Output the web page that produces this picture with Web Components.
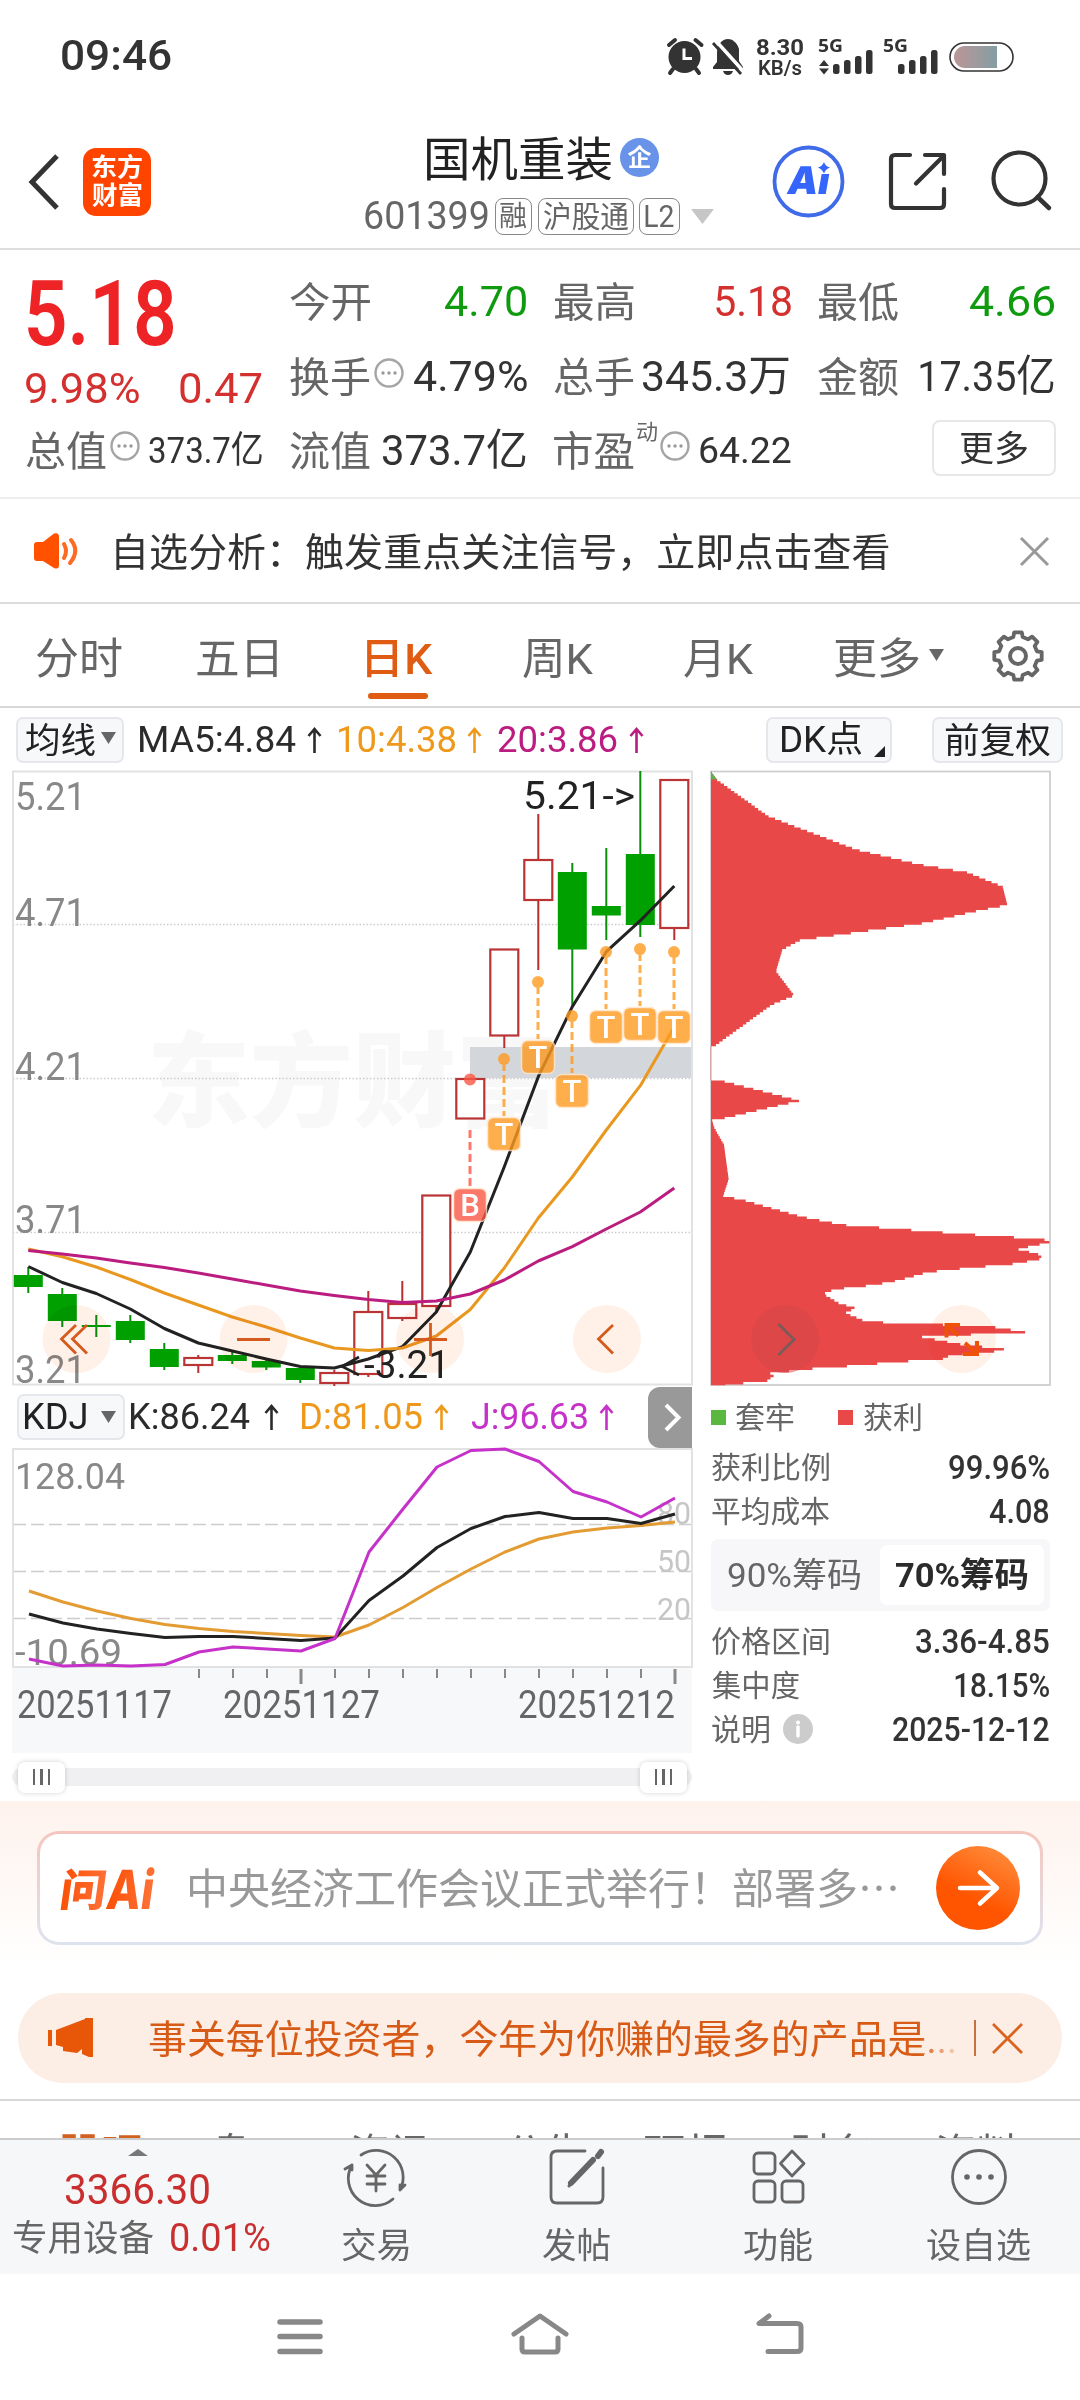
<!DOCTYPE html>
<html lang="zh-CN">
<head>
<meta charset="utf-8">
<title>国机重装 601399</title>
<style>
html,body{margin:0;padding:0;background:#fff}
body{width:1080px;height:2400px;overflow:hidden;font-family:Roboto,"Noto Sans CJK SC",sans-serif;color:#222}
</style>
</head>
<body>
<stock-page></stock-page>
<script>
const FONT='Roboto,"Noto Sans CJK SC",sans-serif';
const ctx=document.createElement('canvas').getContext('2d');

/* Base class: open shadow root filled from css + markup. */
class Base extends HTMLElement{
  connectedCallback(){
    if(this.shadowRoot)return;
    const r=this.attachShadow({mode:'open'});
    r.innerHTML='<style>:host{display:block;box-sizing:border-box}*{box-sizing:border-box}svg{display:block;flex:none;overflow:visible}.row{display:flex;align-items:center}.row>*{flex:none}'+this.css()+'</style>'+this.html();
  }
  css(){return ''}
  html(){return '<slot></slot>'}
}
/* A label whose drawn glyphs span exactly `w` pixels at font size `s`. */
class FitText extends HTMLElement{
  connectedCallback(){
    if(this.shadowRoot)return;
    const s=+this.getAttribute('s'),w=+this.getAttribute('w'),b=this.getAttribute('b')||400,c=this.getAttribute('c')||'inherit';
    ctx.font=`${b} ${s}px ${FONT}`;
    const m=ctx.measureText(this.textContent),L=m.actualBoundingBoxLeft,R=m.actualBoundingBoxRight;
    const k=w/(L+R),dy=/^[\u4e00-\u9fff]/.test(this.textContent)?s*.04:0;
    const r=this.attachShadow({mode:'open'});
    r.innerHTML=`<style>:host{display:block;flex:none;width:${w}px;height:${s}px;line-height:${s}px;font-size:${s}px;font-weight:${b};color:${c};white-space:nowrap}
      span{display:inline-block;transform-origin:0 50%;transform:translate(${L*k}px,${dy}px) scaleX(${k})}</style><span><slot></slot></span>`;
  }
}
const t=(txt,s,w,c,b)=>`<fit-text s="${s}" w="${w}" ${c?`c="${c}"`:''} ${b?`b="${b}"`:''}>${txt}</fit-text>`;
/* A flex row; every item is [start, width, markup, extra style]. */
const row=(h,items,style='')=>{let e=0;return `<div class="row" style="height:${h}px;${style}">`+items.map(([x,w,m,st])=>{const g=x-e;e=x+w;return `<div style="margin-left:${g}px;width:${w}px;${st||''}">${m}</div>`}).join('')+'</div>'};
const T=(x,w,txt,s,c,b,st)=>[x,w,t(txt,s,w,c,b),st];
const G='#666',DK='#2b2b2b';

class StatusBar extends Base{
  css(){return ':host{height:113px}'}
  html(){
    const bars=(x,h)=>`<rect x="${x}" y="${75-h}" width="6.5" height="${h}" rx="2.5"/>`;
    const g5=x=>`<text x="${x}" y="53" font-size="18" font-weight="700" font-family="Noto Sans" textLength="25" lengthAdjust="spacingAndGlyphs">5G</text>`;
    return row(113,[T(62,109,'09:46',42.5,'#333',500),
    [667,37,`<svg width="37" height="37" viewBox="0 0 37 37" fill="#333"><circle cx="17.500" cy="19" r="16"/><path d="M2 7 L8 2 M34.500 7 L28.500 2 M6 31 L3 35 M29 31 L32 35" stroke="#333" stroke-width="4" stroke-linecap="round"/><path d="M17 10.500 V20.500 H25" fill="none" stroke="#fff" stroke-width="3"/></svg>`],
    [712,32,`<svg width="32" height="36" viewBox="0 0 32 36"><path d="M16 0 C20 0 25 3 27 10 V22 L31 28 V30 H1 V28 L5 23 V14 C5 6 10 0 16 0Z M11 32 H21 C20 35 18 36 16 36 S12 35 11 32Z" fill="#333"/><path d="M4 2 L32 33" stroke="#fff" stroke-width="3.500"/><path d="M1 4 L29 35" stroke="#333" stroke-width="2.800"/></svg>`],
    [757,46,`${t('8.30',22.500,46,'#333',700)}<div style="padding-left:2px">${t('KB/s',19.500,43,'#333',600)}</div>`,'padding-top:1px'],
    [819,54,`<svg width="54" height="37" viewBox="819 39 54 37" fill="#333">${g5(818)}${bars(833,10)}${bars(844,14)}${bars(855,18)}${bars(866,24)}<path d="M819 67 L824 61 L829 67Z M819 69.500 L824 75.500 L829 69.500Z"/></svg>`],
    [883,56,`<svg width="56" height="37" viewBox="883 39 56 37" fill="#333">${g5(883)}${bars(898,10)}${bars(909,14)}${bars(920,18)}${bars(931,24)}</svg>`],
    [949,65,`<svg width="65" height="30"><defs><linearGradient id="g"><stop offset="0" stop-color="#bb9698"/><stop offset="1" stop-color="#849ea3"/></linearGradient></defs><rect x="1" y="1" width="63" height="28" rx="14" fill="#fff" stroke="#333" stroke-width="1.600"/><path d="M16 4 H48 V26 H16 A11 11 0 0 1 16 4Z" fill="url(#g)"/></svg>`]]);
  }
}
class StockHeader extends Base{
  css(){return `:host{height:137px;border-bottom:2px solid #ddd;display:flex}
  .logo{width:68px;height:68px;border-radius:13px;background:#ff4400;padding:6px 9px;display:flex;flex-direction:column;gap:3px}
  .mid{width:350px;margin-left:214px;display:flex;flex-direction:column}
  .badge{width:39px;height:39px;border-radius:50%;background:#6893e8;display:flex;align-items:center;justify-content:center}
  .tag{height:37px;border:1.5px solid #888;border-radius:8px;display:flex;align-items:center;justify-content:center}`}
  html(){return `
  ${row(137,[[28,31,`<svg width="31" height="56"><path d="M29 2 L4 28 L29 54" fill="none" stroke="#333" stroke-width="5"/></svg>`],
   [83,68,`<div class="logo">${t('东方',25,50,'#fff',700)}${t('财富',25,50,'#fff',700)}</div>`]])}
  <div class="mid">
   ${row(54,[T(62,185,'国机重装',47,'#222'),[255,39,`<div class="badge">${t('企',24,24,'#fff',700)}</div>`]],'margin-top:17px')}
   ${row(44,[T(0,123,'601399',39,G),[130,37,`<div class="tag">${t('融',28,27,G)}</div>`],[173,96,`<div class="tag">${t('沪股通',30,85,G)}</div>`],[274,41,`<div class="tag">${t('L2',31,29,G)}</div>`],[326,23,`<svg width="23" height="15"><path d="M0 0H23L11.500 15Z" fill="#c6c6c6"/></svg>`]],'margin-top:10px')}
  </div>
  ${row(137,[[57,72,`<svg width="72" height="72" viewBox="772 146 72 72"><circle cx="808.500" cy="181.500" r="34" fill="#fff" stroke="#3f6ae8" stroke-width="3.800"/><text x="786" y="194.500" font-family="Inter" font-weight="900" font-size="38" fill="#3565fb" textLength="42" lengthAdjust="spacingAndGlyphs" transform="translate(34 0) skewX(-10)">Ai</text><rect x="814" y="162" width="18" height="12" fill="#fff"/><path d="M824 162 Q825.500 166.500 830 167.500 Q825.500 169 824 173.500 Q822 169 818 167.500 Q822 166.500 824 162Z" fill="#3565fb"/></svg>`],
  [173,60,`<svg width="60" height="60" viewBox="887 152 60 60"><path d="M909 155 H894 Q890 155 890 159 V204 Q890 208 894 208 H939 Q943 208 943 204 V189 M924 155 H943 V174 M943 155.500 L915 183.500" fill="none" stroke="#333" stroke-width="4.200" stroke-linecap="round" stroke-linejoin="round"/></svg>`],
  [276,60,`<svg width="60" height="60" viewBox="990 152 60 60"><circle cx="1018.500" cy="178.500" r="26" fill="none" stroke="#333" stroke-width="4.200"/><path d="M1036.500 197 L1048 208" stroke="#333" stroke-width="4.500" stroke-linecap="round"/></svg>`]])}`}
}
const dots='<svg width="30" height="30"><circle cx="15" cy="15" r="13.500" fill="none" stroke="#a5a5a5" stroke-width="2.400"/><g fill="#999"><circle cx="9" cy="15" r="1.700"/><circle cx="15" cy="15" r="1.700"/><circle cx="21" cy="15" r="1.700"/></g></svg>';
class QuotePanel extends Base{
  css(){return `:host{height:249px;border-bottom:2px solid #eee;display:flex}
  .l{width:290px}.r{width:790px}.btn{width:124px;height:56px;border:2px solid #e7e7e7;border-radius:8px;display:flex;align-items:center;justify-content:center}`}
  html(){const R='#d3302f',N='#109a10',K='#333';return `
  <div class="l">${row(90,[T(28,146,'5.18',90,'#ee2326',600)],'margin-top:20px')}
   ${row(46,[T(26,113,'9.98%',43,R),T(180,82,'0.47',43,R)],'margin-top:5px')}
   ${row(60,[T(26,80,'总值',41,G),[110,30,dots,'margin-top:-8px'],T(149,113,'373.7亿',37,K)],'margin-top:9px')}</div>
  <div class="r">
   ${row(60,[T(0,80,'今开',41,G),T(155,81,'4.70',43,N),T(264,80,'最高',41,G),T(426,75,'5.18',43,R),T(528,80,'最低',41,G),T(680,85,'4.66',43,N)],'margin-top:21px')}
   ${row(60,[T(0,80,'换手',41,G),[84,30,dots,'margin-top:-7px'],T(124,113,'4.79%',43,K),T(264,80,'总手',41,G),T(353,146,'345.3万',43,K),T(528,80,'金额',41,G),T(630,134,'17.35亿',43,K)],'margin-top:15px')}
   ${row(60,[T(0,80,'流值',41,G),T(93,143,'373.7亿',43,K),T(264,80,'市盈',41,G),[347,20,t('动',21,20,G),'margin-top:-38px'],[370,30,dots,'margin-top:-8px'],T(410,91,'64.22',37,K),[642,124,`<div class="btn">${t('更多',35,68,K)}</div>`,'margin-top:-4px']],'margin-top:14px')}
  </div>`}
}
class SignalNotice extends Base{
  css(){return ':host{height:105px;border-bottom:2px solid #dcdcdc}'}
  html(){return row(104,[[34,45,`<svg width="45" height="36"><path d="M0 12 Q0 9 3 9 H9 L20 0.500 Q25 -1 25 4 V32 Q25 37 20 35 L9 28 H3 Q0 28 0 25Z" fill="#ff5100"/><path d="M30 11 Q34 18 30 25 M37 7 Q46 18 36 30" fill="none" stroke="#ff6a22" stroke-width="4" stroke-linecap="round"/></svg>`],
   T(116,773,'自选分析：触发重点关注信号，立即点击查看',38.500,'#333'),
   [1020,29,`<svg width="29" height="29"><path d="M1 1L28 28M28 1L1 28" stroke="#999" stroke-width="3"/></svg>`]])}
}
class PeriodTabs extends Base{
  css(){return ':host{height:104px;border-bottom:2px solid #d8d8d8}.bar{width:60px;height:6px;border-radius:3px;background:#df5c12;margin:-14px 0 0 368px}'}
  html(){
   let p='';for(let i=0;i<8;i++){const a=i*45-90,f=(d,r)=>{const q=(a+d)*Math.PI/180;return (26+r*Math.cos(q)).toFixed(1)+' '+(26+r*Math.sin(q)).toFixed(1)};p+=(i?'L':'M')+f(-9,24)+'L'+f(9,24)+'L'+f(14,19.500)+'L'+f(31,19.500)}
   return row(103,[T(36,86,'分时',43,G),T(197,80,'五日',43,G),T(367,66,'日K',43,'#df5c12',500),T(523,70,'周K',43,G),T(684,69,'月K',43,G),T(835,84,'更多',43,G),[929,15,'<svg width="15" height="12"><path d="M0 0H15L7.500 12Z" fill="#666"/></svg>','margin-top:-6px'],[992,52,`<svg width="52" height="52"><path d="${p}Z" fill="none" stroke="#666" stroke-width="3.800" stroke-linejoin="round"/><circle cx="26" cy="26" r="8" fill="none" stroke="#666" stroke-width="4"/></svg>`,'margin-top:-3px']],'padding-top:4px')+'<div class="bar"></div>'}
}
const up=(x,c)=>[x,15,`<svg width="15" height="27"><path d="M7.500 26V2M1.500 9L7.500 2L13.500 9" fill="none" stroke="${c}" stroke-width="2.600"/></svg>`];
const chipCss='.chip{height:46px;border:2px solid #e6e7ec;border-radius:7px;background:#f7f8fa;display:flex;align-items:center}';
class MaBar extends Base{
  css(){return ':host{height:62px}'+chipCss}
  html(){const O='#ee991c',P='#bb1c80';return row(62,[[16,108,`<div class="chip" style="padding-left:8px;gap:6px">${t('均线',35,69,'#222')}<svg width="15" height="12" style="margin-top:-4px"><path d="M0 0H15L7.500 12Z" fill="#666"/></svg></div>`],
   T(140,156,'MA5:4.84',37.500,DK),up(307,DK),T(339,117,'10:4.38',37.500,O),up(467,O),T(498,119,'20:3.86',37.500,P),up(629,P),
   [766,126,`<div class="chip" style="padding-left:13px;gap:12px">${t('DK点',36,81,'#222')}<svg width="11" height="11" style="margin-top:22px"><path d="M11 0V11H0Z" fill="#222"/></svg></div>`],
   [932,131,`<div class="chip" style="padding-left:11px">${t('前复权',35,105,'#222')}</div>`]],'padding-top:2px')}
}
const tx=(x,y,w,s,c,str,b)=>`<text x="${x}" y="${y}" font-size="${s}" fill="${c}" textLength="${w}" lengthAdjust="spacingAndGlyphs" font-weight="${b||400}">${str}</text>`;
/* Candles: kind, body top, body bottom, wick top, wick bottom */
const CANDLES=[['g',1275,1287,1267,1293],['g',1294,1321,1288,1327],['g',1325,1327,1315,1337],['g',1321,1340,1315,1343],['g',1349,1367,1343,1370],['r',1358,1365,1355,1373],['g',1355,1361,1351,1364],['g',1361,1367.5,1360,1370],['g',1368,1380,1368,1383],['r',1373,1383,1370,1386],['r',1312,1374,1291,1377],['r',1304,1318,1281,1321],['r',1195.5,1306,1195,1311],['r',1079,1118.5,1079,1118],['r',949.5,1035.5,949,1048],['r',860,900,814,970],['g',872,949.5,863,1006],['g',906,915.5,848,940],['g',854,925,771,937],['r',780,928,780,940]];
const line=(a,x0,c)=>`<polyline points="${a.map((y,i)=>(x0+34*i)+','+y).join(' ')}" fill="none" stroke="${c}" stroke-width="3" stroke-linejoin="round"/>`;
const round=x=>`<circle cx="${x}" cy="1339" r="34" fill="#fff0e8" style="mix-blend-mode:multiply"/>`;
class CandleChart extends Base{
  css(){return ':host{width:700px;height:616px}text{font-family:Roboto,"Noto Sans CJK SC",sans-serif}'}
  html(){
   const X=i=>28.300+34*i;let s='';
   s+=`<text x="147" y="1119" font-size="103" font-weight="900" fill="#f8f8f8" textLength="412">东方财富</text>`;
   for(const y of [924.5,1078.5,1232.5])s+=`<path d="M13 ${y}H692" stroke="#ccc" stroke-width="1.500" stroke-dasharray="1.500 2"/>`;
   s+='<rect x="470" y="1047" width="222" height="31" fill="#d3d6da"/><rect x="13" y="771.500" width="679" height="613" fill="none" stroke="#e2e2e2" stroke-width="2"/>';
   for(const [y,l] of [[810,'5.21'],[926,'4.71'],[1080,'4.21'],[1233,'3.71'],[1382.5,'3.21']])s+=tx(15,y,71,38.5,'#888',l);
   CANDLES.forEach(([k,a,b,c,d],i)=>{const x=X(i);s+=k=='g'?`<path d="M${x} ${c}V${d}" stroke="#0a8f0a" stroke-width="2"/><rect x="${x-14.5}" y="${a}" width="29" height="${b-a}" fill="#00a000"/>`:`<path d="M${x} ${c}V${a}M${x} ${b}V${d}" stroke="#b92f2f" stroke-width="2"/><rect x="${x-14}" y="${a}" width="28" height="${b-a}" fill="#fff" stroke="#b93434" stroke-width="2.200"/>`});
   s+=line([1266.5,1282.5,1293.5,1309,1328.5,1343,1351,1359,1366.5,1368,1359,1346.7,1312,1252,1166.7,1076.7,1006.7,951.7,920.7,886],28.3,'#222');
   s+=line([1249,1256.7,1267,1279.5,1293,1305,1317,1327,1338,1348,1350.5,1348,1336,1309.5,1268,1218,1177,1130,1085.7,1027],28.3,'#e9981f');
   s+=line([1250.5,1254,1258,1263,1267.5,1273,1279,1285,1291,1295.5,1299.5,1302.5,1301,1294,1280,1261,1246.7,1229,1212,1188],28.3,'#bb1c80');
   const mark=(x,dy,from,cy,l,c)=>`<g opacity=".8"><circle cx="${x}" cy="${dy}" r="6" fill="${c}"/><path d="M${x} ${from}V${cy-18}" stroke="${c}" stroke-width="3" stroke-dasharray="8 4"/><rect x="${x-16.5}" y="${cy-16.5}" width="33" height="33" rx="6" fill="${c}" stroke="#ffe3c4" stroke-width="1.500"/></g><text x="${x}" y="${cy+10.500}" font-size="31" font-weight="500" fill="#fff" text-anchor="middle">${l}</text>`;
   for(const [x,d,c] of [[504,1059,1134],[538,982,1057],[572,1016,1091],[606,952,1027],[640,949,1024],[674,952,1027]])s+=mark(x,d,d+4,c,'T','#ff9a20');
   s+=mark(470,1079.5,1130,1205,'B','#fb5845');
   s+=tx(523,808.5,112,39,'#222','5.21-&gt;')+`<path d="M359 1357L342 1366.500L359 1375" fill="none" stroke="#222" stroke-width="2.600"/>`+tx(364,1378,86,39,'#222','-3.21');
   s+=round(76.5)+round(253.6)+round(430)+round(607);
   s+='<path d="M76 1325L61.500 1339L76 1353.500M87 1325L72.500 1339L87 1353.500M237 1339.500H270M414 1339.500H447M430.500 1323V1356M613 1325L598.500 1339L613 1353.500" fill="none" stroke="#d55a1c" stroke-width="2.800"/>';
   return `<svg width="700" height="616" viewBox="0 770 700 616">${s}</svg>`}
}
class ChipDistribution extends Base{
  css(){return ':host{width:380px;height:616px}'}
  html(){
   const P=[[62,28],[80,48],[235,138],[500,220],[690,256],[830,275],[938,310],[952,355],[850,372],[700,400],[520,420],[330,442],[277,465],[258,518],[313,577],[245,600],[72,702],[62,704],[62,784],[95,786],[330,835],[95,879],[66,881],[72,900],[102,943],[116,1027],[99,1070],[150,1076],[340,1120],[460,1139],[625,1149],[830,1162],[940,1168],[1058,1173],[1080,1182],[1020,1192],[985,1199],[1043,1210],[1060,1221],[980,1234],[830,1245],[715,1255],[625,1275],[555,1286],[435,1297],[400,1308],[447,1331],[497,1343],[466,1355],[520,1373],[592,1379],[735,1383],[920,1390],[1007,1402],[692,1413],[755,1423],[820,1433],[944,1443],[905,1451],[768,1458],[782,1466],[608,1476],[494,1484],[380,1490],[316,1496],[234,1501],[254,1507],[232,1521],[170,1526],[105,1532]];
   let d='M711 771.500',q=0;const st=5.96;
   for(let y=28;y<1532;y+=st){const m=Math.min(y+st/2,1531.9);while(P[q+1][1]<m)q++;const [a,b]=P[q],[c,e]=P[q+1];const x=690+(a+(c-a)*(m-b)/(e-b))/3;d+=`H${x.toFixed(1)}V${(760+Math.min(y+st,1532)/2.45).toFixed(1)}`}
   return `<svg width="380" height="616" viewBox="700 770 380 616"><rect x="711" y="771.500" width="339" height="613.500" fill="#fff" stroke="#ccc" stroke-width="1.700"/><path d="${d}H711Z" fill="#e94848"/><path d="M711 771.500L717 779.500H711Z" fill="#5fb04f"/>
   <circle cx="785" cy="1339" r="34" fill="#d34545" fill-opacity=".5"/><path d="M778.500 1324L794 1339.500L778.500 1355" fill="none" stroke="#7d5a5a" stroke-width="3"/>
   ${round(962)}<path d="M946.500 1337.500V1325H960M947 1325.500L958.500 1335.500M977 1341V1354H963M976.500 1353.500L965 1343" fill="none" stroke="#ee5208" stroke-width="4"/></svg>`}
}
class KdjPane extends Base{
  css(){return ':host{width:700px}text{font-family:Roboto,"Noto Sans CJK SC",sans-serif}.next{width:44px;height:61px;background:#999;border-radius:12px 0 0 12px}.slide{width:680px;height:18px;border-radius:9px;background:#f0f0f3;margin:0 0 0 12px;display:flex;align-items:center;justify-content:space-between;padding:0 5px 0 6px}.h{width:47px;height:31px;border-radius:7px;background:#fff;box-shadow:0 0 5px rgba(0,0,0,.18);display:flex;gap:5px;align-items:center;justify-content:center}.h i{width:2.5px;height:16px;background:#666}'+chipCss}
  html(){
   const O='#ee991c',P='#c531c9';let s='<rect x="12" y="1668" width="680" height="85" fill="#f7f8fa"/><path d="M13 1524.500H692M13 1571.500H692M13 1618.500H692" stroke="#ccc" stroke-width="1.500" stroke-dasharray="13 5"/><rect x="13" y="1449" width="679" height="218" fill="none" stroke="#e2e2e2" stroke-width="2"/>';
   s+=tx(657,1523.5,34,31,'#c6c6c6','80')+tx(657,1572,34,31,'#c6c6c6','50')+tx(657,1620,34,31,'#c6c6c6','20');
   s+=tx(15,1489,110,37.5,'#888','128.04')+tx(15,1665,107,37.5,'#888','-10.69');
   s+=line([1591,1602,1611,1618.5,1624.5,1628.5,1631.5,1633.5,1635.5,1637,1625,1607.5,1587.5,1569,1552,1539,1532,1528,1525.5,1522],29,'#e39c33');
   s+=line([1614,1623,1629,1633.5,1637.5,1636.5,1636.5,1638.5,1640.5,1638,1600.5,1576,1547.5,1528.5,1516.5,1512.5,1518.5,1518.5,1523.5,1514],29,'#222');
   s+=line([1659,1666,1665,1666,1664.5,1652,1647,1649,1651,1638.5,1552,1509,1467,1450.5,1449,1461.5,1491.5,1502,1517,1498],29,P);
   for(let i=5;i<20;i++){const M=i==8||i==19;s+=`<path d="M${29+34*i} 1669V${M?1684:1678}" stroke="#888" stroke-width="${M?3:2}"/>`}
   s+=tx(17,1718,155,38,G,'20251117')+tx(223,1718,157,38,G,'20251127')+tx(518,1718,157,38,G,'20251212');
   return row(62,[[17,108,`<div class="chip" style="padding-left:6px;gap:15px">${t('KDJ',37.5,61,'#222')}<svg width="15" height="12"><path d="M0 0H15L7.500 12Z" fill="#666"/></svg></div>`],T(131,119,'K:86.24',37.5,DK),up(264,DK),T(302,120,'D:81.05',37.5,O),up(434,O),T(471,116,'J:96.63',37.5,P),up(599,P),[648,44,'<div class="next"><svg width="44" height="61"><path d="M18 18L30.500 30.500L18 43" fill="none" stroke="#fff" stroke-width="4"/></svg></div>']])
   +`<svg width="700" height="305" viewBox="0 1448 700 305">${s}</svg><div style="height:15px"></div><div class="slide"><div class="h"><i></i><i></i><i></i></div><div class="h"><i></i><i></i><i></i></div></div>`}
}
class CostPanel extends Base{
  css(){return ':host{width:380px}.sq{width:15px;height:15px}.seg{margin:6px 0 8px 11px;width:339px;height:72px;border-radius:7px;background:#f7f7fa;display:flex;align-items:center;justify-content:space-between;padding:0 6px 0 17px}.on{width:164px;height:60px;border-radius:7px;background:#fff;display:flex;align-items:center;justify-content:center}'}
  html(){const R=(a,aw,b,bx,bw,x)=>row(44,[T(12,aw,a,30,G),...(x||[]),T(bx,bw,b,33,'#333',500)]);
   return row(56,[[11,15,'<div class="sq" style="background:#5ab840"></div>'],T(36,58,'套牢',30,G),[138,16,'<div class="sq" style="background:#e94848"></div>'],T(164,57,'获利',30,G)],'margin-top:3px')
   +R('获利比例',117,'99.96%',249,100)+R('平均成本',117,'4.08',289,60)
   +`<div class="seg">${t('90%筹码',34,132,G)}<div class="on">${t('70%筹码',34,132,'#2b2b2b',700)}</div></div>`
   +R('价格区间',117,'3.36-4.85',216,133)+R('集中度',87,'18.15%',255,94)
   +R('说明',57,'2025-12-12',193,156,[[83,30,'<svg width="30" height="30"><circle cx="15" cy="15" r="15" fill="#ccc"/><circle cx="15" cy="8.500" r="2" fill="#fff"/><path d="M15 13V22" stroke="#fff" stroke-width="3.500" stroke-linecap="round"/></svg>']])}
}
class AskAi extends Base{
  css(){return ':host{height:192px;padding:30px 37px 0;background:linear-gradient(#fef2ed,#fff 88%)}.b{height:114px;border:3px solid transparent;border-radius:22px;background:linear-gradient(#fff,#fff) padding-box,linear-gradient(#f5c5bd,#dde4ef) border-box}'}
  html(){return `<div class="b">${row(108,[[19,100,`<svg width="100" height="46" viewBox="59 1865 100 46"><defs><linearGradient id="a"><stop offset="0" stop-color="#fb4f05"/><stop offset="1" stop-color="#ff7238"/></linearGradient></defs><g fill="url(#a)" transform="translate(60 1907) skewX(-8)"><text x="-2" y="-1" font-family="Noto Sans CJK SC" font-weight="900" font-size="44" textLength="46" lengthAdjust="spacingAndGlyphs">问</text><text x="45" y="2" font-family="Inter" font-weight="800" font-size="54" textLength="47" lengthAdjust="spacingAndGlyphs">Ai</text></g></svg>`],
   T(150,706,'中央经济工作会议正式举行！部署多⋯',42,'#999'),
   [896,84,`<svg width="84" height="84"><defs><linearGradient id="o" x1=".3" y1="1" x2=".8" y2="0"><stop offset=".35" stop-color="#ff5500"/><stop offset="1" stop-color="#ff8d3c"/></linearGradient></defs><circle cx="42" cy="42" r="42" fill="url(#o)"/><path d="M24 42H60M44 26.500L61 42L44 57.500" fill="none" stroke="#fff" stroke-width="4.500" stroke-linecap="round" stroke-linejoin="round"/></svg>`]])}</div>`}
}
class PromoBanner extends Base{
  css(){return ':host{margin:0 18px;height:90px;border-radius:45px;background:#fceee5}.fade{-webkit-mask:linear-gradient(90deg,#000 770px,#0002 810px);mask:linear-gradient(90deg,#000 770px,#0002 810px)}'}
  html(){return row(90,[[29,47,`<svg width="47" height="40" fill="#e85608"><path d="M1 12H5V28H1Z M9 12L38 1V0H46V39H42L35 36V31L30 35L16 33V29L9 27Z"/></svg>`],
   [131,807,`<div class="fade">${t('事关每位投资者，今年为你赚的最多的产品是...',39,806,'#d75b17')}</div>`],
   [956,2,'<div style="height:36px;background:#c9713c"></div>'],
   [974,31,`<svg width="31" height="31"><path d="M1 1L30 30M30 1L1 30" stroke="#d9631f" stroke-width="2.800"/></svg>`]])}
}
class SectionTabs extends Base{
  css(){return ':host{margin-top:16px;height:39px;border-top:2px solid #d8d8d8;overflow:hidden}'}
  html(){return row(46,[T(60,83,'股吧',43,'#d2611f',700),T(211,77,'盘口',43,G),T(352,78,'资讯',43,G),T(506,78,'公告',43,G),T(644,84,'研报',43,G),T(791,82,'财务',43,G),T(937,81,'资料',43,G)],'margin-top:29px')}
}
class ActionBar extends Base{
  css(){return `:host{height:136px;border-top:2px solid #ccc;background:#f6f7f9;display:flex}.idx{width:275px}.a{width:201px;display:flex;flex-direction:column;align-items:center;padding-top:7px;gap:21px}`}
  html(){const R='#c92f2f',a=(svg,l,w)=>`<div class="a"><svg width="62" height="60" viewBox="-31 -30 62 60" fill="none" stroke="#666" stroke-width="2.800" stroke-linecap="round" stroke-linejoin="round">${svg}</svg>${t(l,35,w,'#666')}</div>`;
   return `<div class="idx"><svg width="20" height="7" style="margin:9px 0 0 128px"><path d="M0 7L10 0L20 7Z" fill="#777"/></svg>${row(44,[T(66,143,'3366.30',43,R)],'margin-top:11px')}${row(44,[T(14,140,'专用设备',36,G),T(171,99,'0.01%',38,R)],'margin-top:5px')}</div>`
   +a('<path d="M-15 -22A27 27 0 0 1 24 13L29 8M24 13V8M17 22A27 27 0 0 1 -24 -12L-31 -8M-24 -12V-7M-9 -12L0 -2L9 -12M0 -2V14M-9 -1H9M-9 7H9"/>','交易',67)
   +a('<path d="M8 -26H-20Q-26 -26 -26 -20V20Q-26 26 -20 26H20Q26 26 26 20V-9"/><path d="M-6 6L16 -17" stroke-width="6"/><path d="M-8 9L-4 4" stroke-width="3"/><path d="M21 -21L24 -25" stroke-width="6"/>','发帖',67)
   +a('<rect x="-24" y="-24" width="21" height="21" rx="4"/><rect x="-24" y="4" width="21" height="21" rx="4"/><rect x="4" y="4" width="21" height="21" rx="4"/><path d="M14 -26L26 -13.500L14 -1L2.500 -13.500Z"/>','功能',68)
   +a('<circle r="26.500"/><g fill="#666" stroke="none"><circle cx="-12" r="2.800"/><circle r="2.800"/><circle cx="12" r="2.800"/></g>','设自选',103)}
}
class NavBar extends Base{
  css(){return ':host{height:126px;padding-top:38px}'}
  html(){const A='fill="none" stroke="#888" stroke-linecap="round" stroke-linejoin="round"';return row(44,[[277,46,`<svg width="46" height="44" ${A} stroke-width="5.500"><path d="M3 10H43M3 24.500H43M3 39.500H43"/></svg>`],
   [511,58,`<svg width="58" height="44" ${A} stroke-width="5"><path d="M3 22L29 4L55 22M11 26V37Q11 40 14 40H44Q47 40 47 37V26"/></svg>`],
   [756,48,`<svg width="48" height="44" ${A} stroke-width="5"><path d="M13 4L3 11.500H41Q45 11.500 45 15V36Q45 39.500 41 39.500H12"/></svg>`]])}
}
class StockPage extends Base{
  css(){return ':host{width:1080px;height:2400px;overflow:hidden;background:#fff}.c{display:flex;align-items:flex-start}.k{height:415px}'}
  html(){return `<status-bar></status-bar><stock-header></stock-header><quote-panel></quote-panel><signal-notice></signal-notice><period-tabs></period-tabs><ma-bar></ma-bar>
  <div class="c"><candle-chart></candle-chart><chip-distribution></chip-distribution></div>
  <div class="c k"><kdj-pane></kdj-pane><cost-panel></cost-panel></div>
  <ask-ai></ask-ai><promo-banner></promo-banner><section-tabs></section-tabs><action-bar></action-bar><nav-bar></nav-bar>`}
}
customElements.define('fit-text',FitText);
for(const [n,c] of Object.entries({'status-bar':StatusBar,'stock-header':StockHeader,'quote-panel':QuotePanel,'signal-notice':SignalNotice,'period-tabs':PeriodTabs,'ma-bar':MaBar,'candle-chart':CandleChart,'chip-distribution':ChipDistribution,'kdj-pane':KdjPane,'cost-panel':CostPanel,'ask-ai':AskAi,'promo-banner':PromoBanner,'section-tabs':SectionTabs,'action-bar':ActionBar,'nav-bar':NavBar,'stock-page':StockPage}))customElements.define(n,c);
</script>
</body>
</html>
